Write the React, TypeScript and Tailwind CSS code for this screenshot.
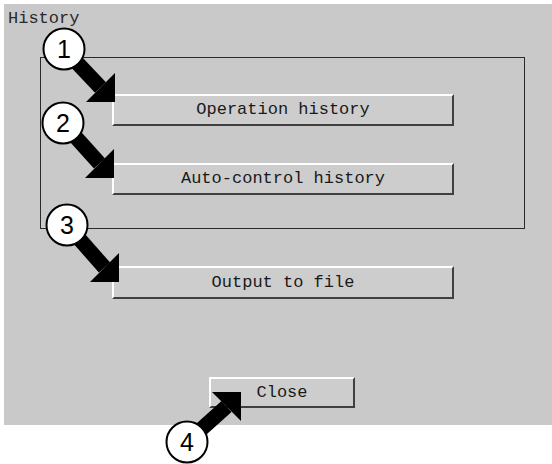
import React from 'react';

const btnFont = { fontFamily: '"Liberation Mono", "DejaVu Sans Mono", monospace' };

const BevelButton = ({ label, className }: { label: string; className: string }) => (
  <div
    className={`flex items-center justify-center border-t-2 border-l-2 border-b-2 border-r-2 border-t-white border-l-white border-b-[#3f3f3f] border-r-[#3f3f3f] bg-[#cdcdcd] text-[17px] text-[#1a1a1a] ${className}`}
    style={btnFont}
  >
    {label}
  </div>
);

// callouts: circle center, arrow head right-angle corner, direction of the head legs
const callouts = [
  { n: '1', cx: 64, cy: 49, tip: [115, 102], dx: 1, dy: 1 },
  { n: '2', cx: 63, cy: 123, tip: [114, 178], dx: 1, dy: 1 },
  { n: '3', cx: 67, cy: 225, tip: [119, 282], dx: 1, dy: 1 },
  { n: '4', cx: 187, cy: 442, tip: [241, 392], dx: 1, dy: -1 },
];

const Callouts = () => (
  <svg className="absolute left-0 top-0 pointer-events-none" width={552} height={464}>
    {callouts.map((c) => {
      const [tx, ty] = c.tip;
      const L = 29;
      const a = [tx, ty - c.dy * L];
      const b = [tx - c.dx * L, ty];
      const mx = (a[0] + b[0]) / 2;
      const my = (a[1] + b[1]) / 2;
      return (
        <g key={c.n}>
          <line x1={c.cx} y1={c.cy} x2={mx} y2={my} stroke="#000" strokeWidth={15} />
          <polygon points={`${a[0]},${a[1]} ${tx},${ty} ${b[0]},${b[1]}`} fill="#000" />
          <circle cx={c.cx} cy={c.cy} r={20.5} fill="#fff" stroke="#000" strokeWidth={2} />
          <text
            x={c.cx}
            y={c.cy + 9}
            textAnchor="middle"
            fontSize={25}
            fontFamily='"Liberation Sans", Arial, sans-serif'
            fill="#000"
          >
            {c.n}
          </text>
        </g>
      );
    })}
  </svg>
);

export default function App() {
  return (
    <div className="relative w-[552px] h-[464px] bg-white overflow-hidden">
      <div className="ml-[4px] mt-[4px] w-[548px] h-[421px] bg-[#c9c9c9] flex flex-col">
        <div className="h-[53px] pl-[4px] pt-[4px] text-[17px] leading-[22px] text-[#2a2a2a]" style={btnFont}>
          History
        </div>
        <div className="ml-[36px] w-[485px] h-[172px] border border-[#2a2a2a] flex flex-col pt-[36px] pl-[71px]">
          <BevelButton label="Operation history" className="w-[342px] h-[32px]" />
          <BevelButton label="Auto-control history" className="w-[342px] h-[32px] mt-[37px]" />
        </div>
        <BevelButton label="Output to file" className="ml-[108px] mt-[37px] w-[342px] h-[33px]" />
        <div className="flex-1" />
        <BevelButton label="Close" className="ml-[205px] mb-[17px] w-[146px] h-[31px]" />
      </div>
      <Callouts />
    </div>
  );
}
